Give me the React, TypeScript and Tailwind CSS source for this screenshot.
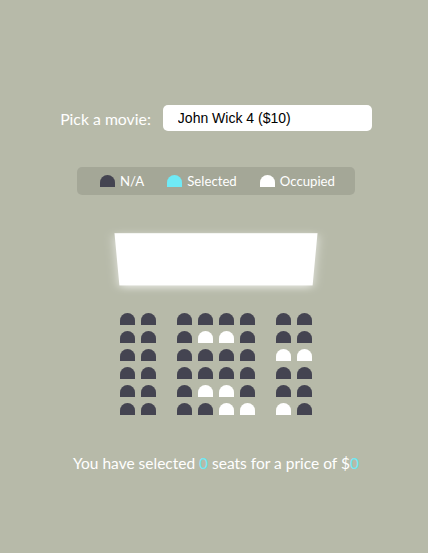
import React from "react";

type S = "n" | "s" | "o";

const rows: S[][] = [
  ["n", "n", "n", "n", "n", "n", "n", "n"],
  ["n", "n", "n", "o", "o", "n", "n", "n"],
  ["n", "n", "n", "n", "n", "n", "o", "o"],
  ["n", "n", "n", "n", "n", "n", "n", "n"],
  ["n", "n", "n", "o", "o", "n", "n", "n"],
  ["n", "n", "n", "n", "o", "o", "o", "n"],
];

function Seat({ s, cls = "" }: { s: S; cls?: string }) {
  const color = s === "o" ? "bg-white" : s === "s" ? "bg-[#6feaf6]" : "bg-[#444451]";
  return <div className={`h-[12px] w-[15px] m-[3px] rounded-t-[10px] ${color} ${cls}`} />;
}

export default function App() {
  return (
    <div className="min-h-[553px] w-full bg-[#b7baa9] flex flex-col items-center pl-[4px] pt-[105px] text-white [font-family:Lato,'Noto_Sans',sans-serif]">
      <div className="flex items-center h-[26px]">
        <label className="text-[15.8px] leading-[19px]">Pick a movie:</label>
        <select
          className="ml-[12px] w-[209px] h-[26px] appearance-none bg-white text-black rounded-[5px] border-0 text-[14px] px-[15px] py-[5px] leading-[16px] outline-none [font-family:'Liberation_Sans',Arial,sans-serif]"
          defaultValue="10"
        >
          <option value="10">John Wick 4 ($10)</option>
        </select>
      </div>

      <ul className="mt-[36px] flex items-center bg-[rgba(0,0,0,0.1)] rounded-[5px] px-[10px] py-[5px] list-none">
        {([
          ["n", "N/A"],
          ["s", "Selected"],
          ["o", "Occupied"],
        ] as [S, string][]).map(([s, t]) => (
          <li key={t} className="flex items-center justify-center mx-[10px]">
            <Seat s={s} />
            <small className="ml-[2px] text-[13.2px] leading-[16px]">{t}</small>
          </li>
        ))}
      </ul>

      <div className="mt-[15px] [perspective:1000px] w-[198px]">
        <div className="my-[15px] h-[70px] w-full bg-white [transform:rotateX(-45deg)] shadow-[0_3px_10px_rgba(255,255,255,0.7)]" />
        {rows.map((r, i) => (
          <div key={i} className="flex">
            {r.map((s, j) => (
              <Seat
                key={j}
                s={s}
                cls={j === 1 ? "mr-[18px]" : j === 6 ? "ml-[18px]" : ""}
              />
            ))}
          </div>
        ))}
      </div>

      <p className="mt-[36px] text-[15.5px] leading-[19px]">
        You have selected <span className="text-[#6feaf6]">0</span> seats for a price of $
        <span className="text-[#6feaf6]">0</span>
      </p>
    </div>
  );
}
